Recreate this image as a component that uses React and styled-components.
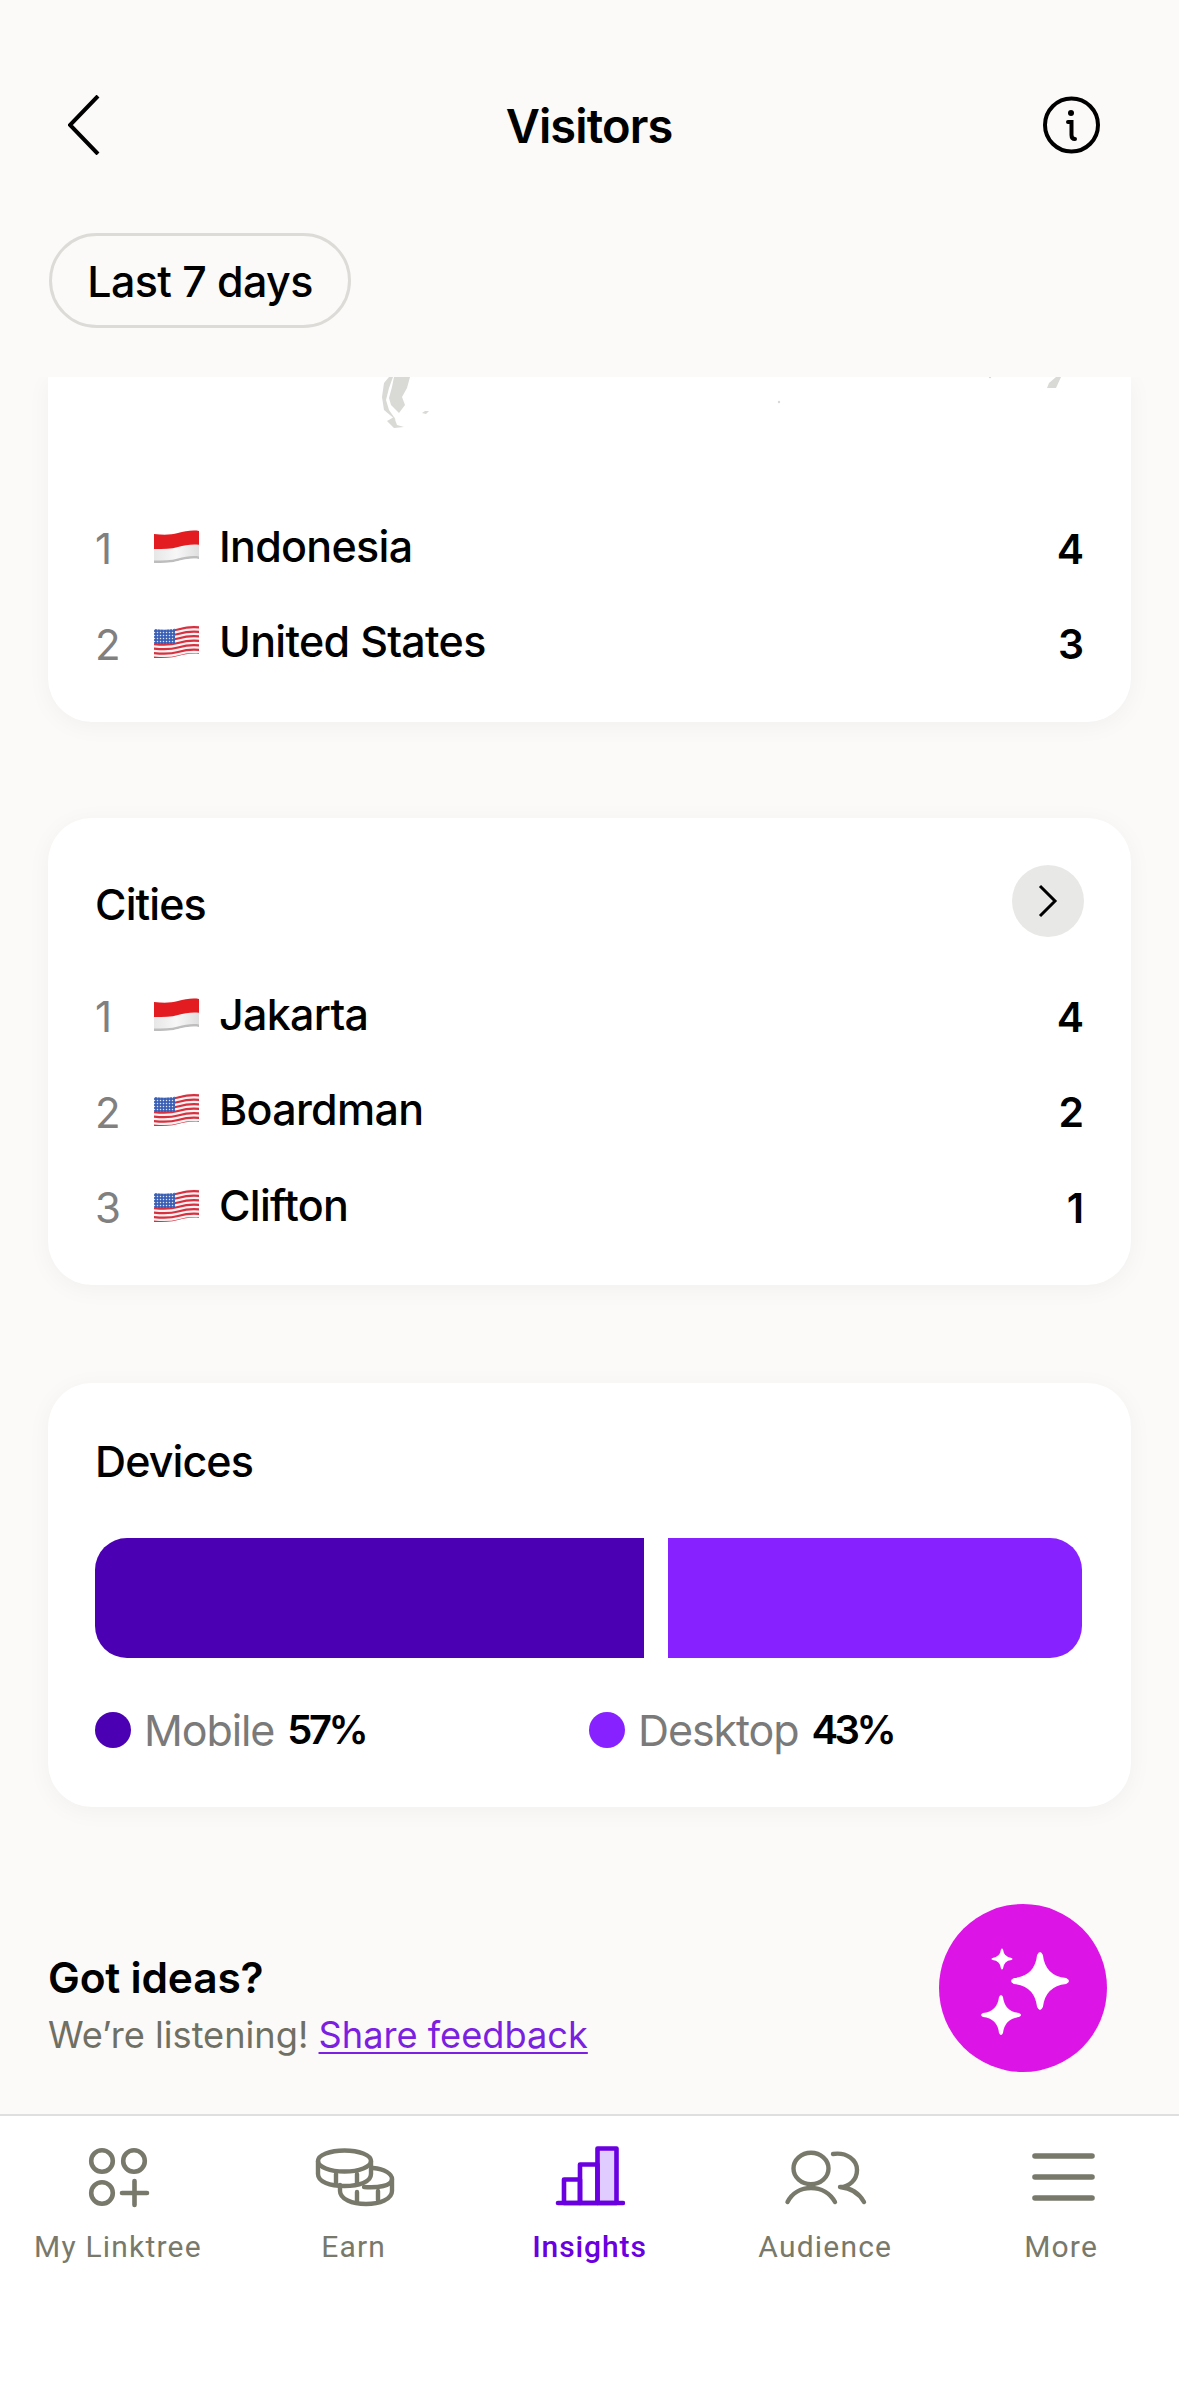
import React from "react";
import styled, { createGlobalStyle } from "styled-components";

const Global = createGlobalStyle`
  html, body { margin: 0; padding: 0; background: #fbfaf9; }
  * { box-sizing: border-box; }
`;

const Page = styled.div`
  position: relative;
  width: 1179px;
  height: 2396px;
  overflow: hidden;
  display: flex;
  flex-direction: column;
  background: #fbfaf9;
  font-family: Inter, "Noto Sans", sans-serif;
  color: #000;
`;

const Header = styled.header`
  flex: none;
  height: 377px;
  padding: 95px 79px 0 68px;
  display: flex;
  flex-direction: column;
`;

const TopBar = styled.div`
  display: flex;
  align-items: center;
  justify-content: space-between;
  height: 60px;
  position: relative;
`;

const Title = styled.h1`
  position: absolute;
  left: 10px;
  right: 0;
  margin: 0;
  text-align: center;
  font-size: 47px;
  font-weight: 600;
  letter-spacing: -0.9px;
`;

const Pill = styled.div`
  align-self: flex-start;
  margin: 78px 0 0 -19px;
  width: 302px;
  height: 95px;
  border: 3px solid #dcdbd8;
  border-radius: 48px;
  display: flex;
  align-items: center;
  justify-content: center;
  font-size: 43px;
  font-weight: 500;
  letter-spacing: -0.6px;
`;

const Scroll = styled.main`
  flex: 1;
  min-height: 0;
  overflow: hidden;
  padding: 0 48px;
  display: flex;
  flex-direction: column;
`;

const Card = styled.section`
  flex: none;
  background: #fff;
  border-radius: ${(p) => (p.$clipped ? "0 0 44px 44px" : "44px")};
  box-shadow: 0 4px 24px rgba(40, 30, 20, 0.045);
  padding: ${(p) => (p.$clipped ? "0 47px 32px" : "47px 47px 31px")};
  margin-bottom: ${(p) => p.$gap || 0}px;
`;

const MapArt = styled.svg`
  display: block;
  width: 1082px;
  height: 122px;
  margin-left: -47px;
`;

const CardHead = styled.div`
  display: flex;
  align-items: center;
  justify-content: space-between;
  height: 72px;
  margin-bottom: ${(p) => p.$below}px;
`;

const CardTitle = styled.h2`
  margin: 0;
  font-size: 43px;
  font-weight: 500;
  letter-spacing: -0.9px;
  transform: translateY(${(p) => p.$shift || 0}px);
`;

const RoundButton = styled.div`
  width: 72px;
  height: 72px;
  border-radius: 50%;
  background: #e8e8e6;
  display: flex;
  align-items: center;
  justify-content: center;
`;

const Row = styled.div`
  display: grid;
  grid-template-columns: 58px 66px 1fr auto;
  align-items: center;
  height: 95.5px;
`;

const Rank = styled.span`
  font-size: 42px;
  color: #808080;
  font-weight: 400;
  transform: translateY(2px);
`;

const FlagArt = styled.svg`
  display: block;
  width: 47px;
  height: 34px;
`;

const Name = styled.span`
  font-size: 43px;
  font-weight: 500;
  letter-spacing: -0.7px;
  transform: translateY(-1px);
`;

const Value = styled.span`
  font-size: 41px;
  font-weight: 600;
  transform: translateY(2px);
`;

const Bar = styled.div`
  display: flex;
  gap: 24px;
  height: 120px;
`;

const Segment = styled.div`
  background: ${(p) => p.$color};
  width: ${(p) => p.$width}px;
  border-radius: ${(p) => p.$radius};
`;

const Legend = styled.div`
  display: grid;
  grid-template-columns: 494px 1fr;
  height: 82px;
  margin-top: 36px;
  align-items: start;
`;

const LegendItem = styled.div`
  display: flex;
  align-items: center;
  height: 72px;
`;

const Dot = styled.span`
  width: 36px;
  height: 36px;
  border-radius: 50%;
  background: ${(p) => p.$color};
  margin-right: 13px;
`;

const LegendLabel = styled.span`
  font-size: 43px;
  color: #7a7a7a;
  letter-spacing: -1.1px;
  margin-right: 13px;
`;

const LegendValue = styled.span`
  font-size: 40px;
  font-weight: 600;
  letter-spacing: -3.5px;
`;

const Feedback = styled.div`
  margin-top: 147px;
`;

const FeedbackTitle = styled.div`
  font-size: 42.5px;
  font-weight: 600;
  letter-spacing: -0.2px;
  line-height: 48px;
`;

const FeedbackText = styled.div`
  margin-top: 10px;
  font-size: 36.2px;
  line-height: 46px;
  color: #6f7063;
`;

const FeedbackLink = styled.a`
  color: #7b1fe0;
  text-decoration: underline;
  text-underline-offset: 4px;
  text-decoration-thickness: 2px;
`;

const Nav = styled.nav`
  flex: none;
  height: 282px;
  background: #fff;
  border-top: 2px solid #e0dfe0;
  display: grid;
  grid-template-columns: repeat(5, 1fr);
  padding-top: 25px;
`;

const NavItem = styled.div`
  display: flex;
  flex-direction: column;
  align-items: center;
  color: ${(p) => (p.$active ? "#6a00e0" : "#78796b")};
  font-family: Roboto, "Noto Sans", sans-serif;
  font-size: 30px;
  font-weight: ${(p) => (p.$active ? 500 : 400)};
  letter-spacing: ${(p) => (p.$active ? 0.9 : 1.2)}px;
  line-height: 34px;
`;

const NavIcon = styled.svg`
  display: block;
  height: 72px;
  width: ${(p) => p.$w || 72}px;
  margin-bottom: 17px;
`;

const Fab = styled.div`
  position: absolute;
  left: 939px;
  top: 1904px;
  width: 168px;
  height: 168px;
  border-radius: 50%;
  background: #dd14e6;
`;

const FabArt = styled.svg`
  display: block;
  width: 168px;
  height: 168px;
`;

function star(cx, cy, r) {
  const k = r * 0.18;
  const t = r * 0.1;
  return `M${cx - t} ${cy - r + t}
    Q${cx} ${cy - r - t} ${cx + t} ${cy - r + t}
    Q${cx + k} ${cy - k} ${cx + r - t} ${cy - t}
    Q${cx + r + t} ${cy} ${cx + r - t} ${cy + t}
    Q${cx + k} ${cy + k} ${cx + t} ${cy + r - t}
    Q${cx} ${cy + r + t} ${cx - t} ${cy + r - t}
    Q${cx - k} ${cy + k} ${cx - r + t} ${cy + t}
    Q${cx - r - t} ${cy} ${cx - r + t} ${cy - t}
    Q${cx - k} ${cy - k} ${cx - t} ${cy - r + t} Z`;
}

const WAVE = "M1 4C10 5 18 5 25 3C32 1 40 0 46 1V29C40 28 32 29 25 31C18 33 10 33 1 33Z";

function stripe(y) {
  return `M0 ${y}C10 ${y + 1} 18 ${y + 1} 25 ${y - 1}C32 ${y - 3} 40 ${y - 4} 47 ${y - 3}`;
}

function Flag({ code, id }) {
  if (code === "id") {
    return (
      <FlagArt viewBox="0 0 47 34">
        <defs>
          <clipPath id={id}><path d={WAVE} /></clipPath>
          <linearGradient id={`${id}-g`} x1="0" y1="0" x2="1" y2="0">
            <stop offset="0" stopColor="#e6e6e6" />
            <stop offset="0.5" stopColor="#f7f7f7" />
            <stop offset="1" stopColor="#dedede" />
          </linearGradient>
        </defs>
        <g clipPath={`url(#${id})`}>
          <rect width="47" height="34" fill={`url(#${id}-g)`} />
          <path d="M0 0H47V15C40 14 32 15 25 17C18 19 10 19 0 19Z" fill="#e21c21" />
          <path d="M1 30.5C10 30.5 18 30.5 25 28.5C32 26.5 40 25.5 46 26.5V29C40 28 32 29 25 31C18 33 10 33 1 33Z" fill="#bdbdbd" />
        </g>
      </FlagArt>
    );
  }
  const ys = [5.5, 10, 14.5, 19, 23.5, 28, 32.5];
  return (
    <FlagArt viewBox="0 0 47 34">
      <defs>
        <clipPath id={id}><path d={WAVE} /></clipPath>
        <pattern id={`${id}-s`} width="3" height="3" patternUnits="userSpaceOnUse">
          <circle cx="1.5" cy="1.5" r="0.75" fill="#dfe6f7" />
        </pattern>
      </defs>
      <g clipPath={`url(#${id})`}>
        <rect width="47" height="34" fill="#f5f3f3" />
        {ys.map((y) => (
          <path key={y} d={stripe(y)} fill="none" stroke="#d8303f" strokeWidth="2.3" />
        ))}
        <rect x="0" y="0" width="22" height="19" fill="#3a5fb5" />
        <rect x="0" y="0" width="22" height="19" fill={`url(#${id}-s)`} />
      </g>
    </FlagArt>
  );
}

function RankRow({ rank, code, name, value, id }) {
  return (
    <Row>
      <Rank>{rank}</Rank>
      <Flag code={code} id={id} />
      <Name>{name}</Name>
      <Value>{value}</Value>
    </Row>
  );
}

const G = "#78796b";
const P = "#6a00e0";

export default function App() {
  return (
    <Page>
      <Global />
      <Header>
        <TopBar>
          <svg width="32" height="60" viewBox="0 0 32 60" fill="none" stroke="#000" strokeWidth="4" strokeLinecap="butt">
            <path d="M30 1L2 30L30 59" />
          </svg>
          <Title>Visitors</Title>
          <svg width="57" height="58" viewBox="0 0 57 58" fill="none" stroke="#000">
            <circle cx="28.5" cy="29" r="26.5" strokeWidth="4" />
            <circle cx="28" cy="17" r="3" fill="#000" stroke="none" />
            <path d="M25 26H28.5V39C28.5 42 30 43 32 43" strokeWidth="4" strokeLinecap="round" />
          </svg>
        </TopBar>
        <Pill>Last 7 days</Pill>
      </Header>

      <Scroll>
        <Card $clipped $gap={96}>
          <MapArt viewBox="0 0 1082 122" fill="#d9d9d5">
            <path d="M341 0L336 6L334 20L336 33L348 43L341 33L338 23L341 11L345 0Z" />
            <path d="M346 0H362L359 11L354 20L357 28L351 36L343 28L341 21L344 10Z" />
            <path d="M339 44L346 40L349 48L356 50L346 51Z" />
            <path d="M374 36L377 34L381 34L378 37Z" />
            <path d="M1008 0H1013L1008 11L999 11L1001 6Z" />
            <circle cx="731" cy="25" r="1.2" />
            <circle cx="942" cy="0" r="1.2" />
          </MapArt>
          <RankRow id="f1" rank="1" code="id" name="Indonesia" value="4" />
          <RankRow id="f2" rank="2" code="us" name="United States" value="3" />
        </Card>

        <Card $gap={98}>
          <CardHead $below={30}>
            <CardTitle $shift={3}>Cities</CardTitle>
            <RoundButton>
              <svg width="22" height="36" viewBox="0 0 22 36" fill="none" stroke="#000" strokeWidth="3">
                <path d="M3 3L18 18L3 33" />
              </svg>
            </RoundButton>
          </CardHead>
          <RankRow id="f3" rank="1" code="id" name="Jakarta" value="4" />
          <RankRow id="f4" rank="2" code="us" name="Boardman" value="2" />
          <RankRow id="f5" rank="3" code="us" name="Clifton" value="1" />
        </Card>

        <Card>
          <CardHead $below={36}>
            <CardTitle $shift={-5}>Devices</CardTitle>
          </CardHead>
          <Bar>
            <Segment $color="#4b00b4" $width={549} $radius="32px 0 0 32px" />
            <Segment $color="#8721ff" $width={414} $radius="0 32px 32px 0" />
          </Bar>
          <Legend>
            <LegendItem>
              <Dot $color="#4b00b4" />
              <LegendLabel>Mobile</LegendLabel>
              <LegendValue>57%</LegendValue>
            </LegendItem>
            <LegendItem>
              <Dot $color="#8721ff" />
              <LegendLabel>Desktop</LegendLabel>
              <LegendValue>43%</LegendValue>
            </LegendItem>
          </Legend>
        </Card>

        <Feedback>
          <FeedbackTitle>Got ideas?</FeedbackTitle>
          <FeedbackText>
            We’re listening! <FeedbackLink>Share feedback</FeedbackLink>
          </FeedbackText>
        </Feedback>
      </Scroll>

      <Nav>
        <NavItem>
          <NavIcon viewBox="0 0 72 72" fill="none" stroke={G} strokeWidth="4.6" strokeLinecap="round">
            <circle cx="20" cy="20" r="10.8" />
            <circle cx="52" cy="20" r="10.8" />
            <circle cx="20" cy="52" r="10.8" />
            <path d="M40 52H65M52.5 40V64" />
          </NavIcon>
          My Linktree
        </NavItem>
        <NavItem>
          <NavIcon $w={84} viewBox="0 0 84 72" fill="none" stroke={G} strokeWidth="4.4" strokeLinecap="round" strokeLinejoin="round">
            <ellipse cx="32.5" cy="20" rx="26.5" ry="10.5" />
            <path d="M6 20V33C6 41 18 45 32.5 45S59 41 59 33V20" />
            <path d="M24 33V43M45 33V43" />
            <path d="M61 27C73 28 80 33 80 38V50C80 58 68 63 54 63C40 63 28 58 28 50V44" />
            <path d="M52 46C66 47 80 45 80 38" />
            <path d="M45 51V60M66 50V59" />
          </NavIcon>
          Earn
        </NavItem>
        <NavItem $active>
          <NavIcon viewBox="0 0 72 72" fill="none" stroke={P} strokeWidth="4.6" strokeLinecap="round" strokeLinejoin="round">
            <path d="M44.5 7.5H63.5V62H44.5Z" fill="#e0ccff" />
            <path d="M27 23.5H44.5V62H27Z" />
            <path d="M11 38.5H27V62H11Z" />
            <path d="M5 62H70" />
          </NavIcon>
          Insights
        </NavItem>
        <NavItem>
          <NavIcon $w={84} viewBox="0 0 84 72" fill="none" stroke={G} strokeWidth="4.4" strokeLinecap="round" strokeLinejoin="round">
            <ellipse cx="28" cy="27.5" rx="17.5" ry="15.7" />
            <path d="M4.5 61C9 52 18 47 28 47C38 47 47 52 52 61" />
            <path d="M50 13C64 11 74 19 74 29C74 39 66 46 57 46C68 47 76 52 81 61" />
          </NavIcon>
          Audience
        </NavItem>
        <NavItem>
          <NavIcon viewBox="0 0 72 72" fill="none" stroke={G} strokeWidth="5.6" strokeLinecap="round">
            <path d="M10 15H67M10 36H67M10 57H67" />
          </NavIcon>
          More
        </NavItem>
      </Nav>

      <Fab>
        <FabArt viewBox="0 0 168 168" fill="#fff">
          <path d={star(101, 77, 29)} />
          <path d={star(63, 55, 10.5)} />
          <path d={star(62, 111, 20)} />
        </FabArt>
      </Fab>
    </Page>
  );
}
